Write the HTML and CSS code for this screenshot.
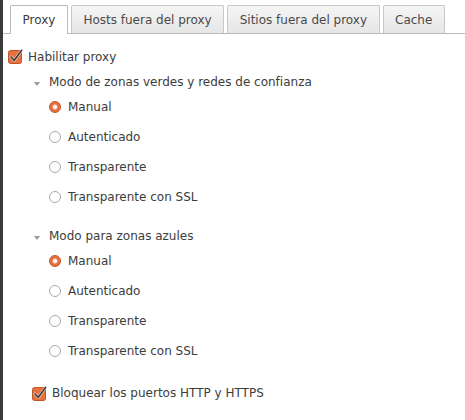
FILE: index.html
```html
<!DOCTYPE html>
<html lang="es">
<head>
    <meta charset="UTF-8">
    <title>Proxy</title>
    <link rel="stylesheet" href="styles.css">
</head>
<body>
    <div class="panel">
        <div class="tab-bar">
            <div class="tab active">Proxy</div>
            <div class="tab">Hosts fuera del proxy</div>
            <div class="tab">Sitios fuera del proxy</div>
            <div class="tab">Cache</div>
        </div>

        <div class="content">
            <label class="check-row">
                <span class="check">
                    <svg width="15" height="15" viewBox="0 0 15 15">
                        <rect x="0.5" y="1.5" width="13" height="13" rx="2" fill="#e8703f" stroke="#c2542b"/>
                        <path d="M3 8 L6.3 11.3 L13.5 1.5" fill="none" stroke="#fbe3d6" stroke-width="2.8" stroke-linecap="round" stroke-linejoin="round"/>
                        <path d="M3 8 L6.3 11.3 L13.5 1.5" fill="none" stroke="#3c3c3c" stroke-width="1.7" stroke-linecap="round" stroke-linejoin="round"/>
                    </svg>
                </span>
                Habilitar proxy
            </label>

            <!-- green zones / trusted networks -->
            <div class="section">
                <div class="section-title"><span class="arrow"></span>Modo de zonas verdes y redes de confianza</div>
                <div class="option"><span class="radio checked"></span>Manual</div>
                <div class="option"><span class="radio"></span>Autenticado</div>
                <div class="option"><span class="radio"></span>Transparente</div>
                <div class="option"><span class="radio"></span>Transparente con SSL</div>
            </div>

            <!-- blue zones -->
            <div class="section second">
                <div class="section-title"><span class="arrow"></span>Modo para zonas azules</div>
                <div class="option"><span class="radio checked"></span>Manual</div>
                <div class="option"><span class="radio"></span>Autenticado</div>
                <div class="option"><span class="radio"></span>Transparente</div>
                <div class="option"><span class="radio"></span>Transparente con SSL</div>
            </div>

            <label class="check-row block-ports">
                <span class="check">
                    <svg width="15" height="15" viewBox="0 0 15 15">
                        <rect x="0.5" y="1.5" width="13" height="13" rx="2" fill="#e8703f" stroke="#c2542b"/>
                        <path d="M3 8 L6.3 11.3 L13.5 1.5" fill="none" stroke="#fbe3d6" stroke-width="2.8" stroke-linecap="round" stroke-linejoin="round"/>
                        <path d="M3 8 L6.3 11.3 L13.5 1.5" fill="none" stroke="#3c3c3c" stroke-width="1.7" stroke-linecap="round" stroke-linejoin="round"/>
                    </svg>
                </span>
                Bloquear los puertos HTTP y HTTPS
            </label>
        </div>
    </div>
</body>
</html>
```

FILE: styles.css
```css
html, body {
    height: 100%;
}
body {
    margin: 0;
    background-color: #fff;
    font-family: 'DejaVu Sans', Verdana, sans-serif;
    font-size: 12px;
    color: #3c3c3c;
}
.panel {
    min-height: 100%;
    border-left: 3px solid #3a3a3a;
    box-sizing: border-box;
}
.tab-bar {
    display: flex;
    align-items: flex-end;
    height: 34px;
    box-sizing: border-box;
    padding: 5px 0 0 7px;
    border-bottom: 1px solid #b9b9b9;
}
.tab {
    height: 28px;
    box-sizing: border-box;
    display: flex;
    align-items: center;
    padding: 0 11.5px;
    margin-right: 3px;
    border: 1px solid #c8c8c8;
    border-bottom: none;
    border-radius: 2px 2px 0 0;
    background: linear-gradient(#f5f5f5, #e6e6e6);
    color: #4a4a4a;
}
.tab.active {
    height: 29px;
    margin-bottom: -1px;
    padding-bottom: 1px;
    background: #fff;
    border-color: #b9b9b9;
    color: #3c3c3c;
}
.content {
    padding: 7px 0 0 5px;
}
.check-row {
    display: flex;
    align-items: center;
    height: 31px;
}
.check {
    display: flex;
    width: 15px;
    height: 15px;
    margin-right: 5px;
}
.section {
    padding-left: 26px;
}
.section.second {
    margin-top: 14px;
}
.section-title {
    display: flex;
    align-items: center;
    height: 20px;
}
.arrow {
    width: 0;
    height: 0;
    border-left: 3.5px solid transparent;
    border-right: 3.5px solid transparent;
    border-top: 4px solid #9a9a9a;
    margin: 3px 9px 0 0;
}
.option {
    display: flex;
    align-items: center;
    height: 30px;
    padding-left: 15px;
}
.radio {
    width: 12px;
    height: 12px;
    box-sizing: border-box;
    border-radius: 50%;
    border: 1px solid #a9a9a9;
    background: #fff;
    margin-right: 7px;
    margin-top: -1px;
}
.radio.checked {
    border-color: #c4532a;
    background: radial-gradient(circle, #fff 0, #fbe2d6 2px, #e06a38 3px, #ec7a48 6px);
}
.block-ports {
    margin-top: 14px;
    height: 26px;
    padding-left: 24px;
}
```
